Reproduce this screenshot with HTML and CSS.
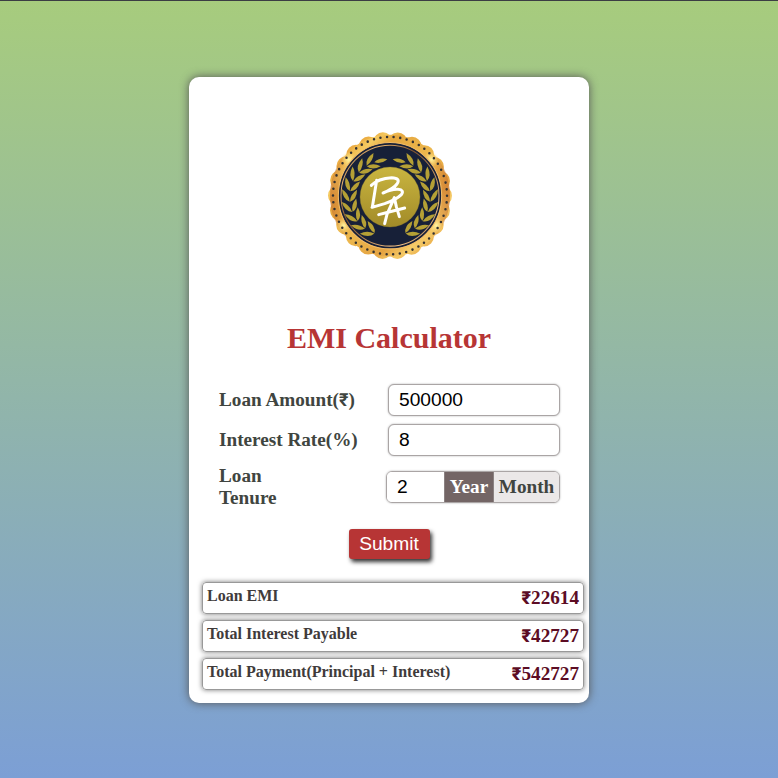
FILE: index.html
```
<!DOCTYPE html>
<html lang="en">
<head>
<meta charset="utf-8">
<title>EMI Calculator</title>
<link rel="stylesheet" href="styles.css">
</head>
<body>
<main class="card">
  <svg class="logo" viewBox="0 0 420 420" aria-hidden="true">
    <defs>
      <linearGradient id="gold" x1="0" y1="0" x2="1" y2="1">
        <stop offset="0" stop-color="#e6a443"/><stop offset=".14" stop-color="#edb145"/><stop offset=".2" stop-color="#f5cb62"/><stop offset=".28" stop-color="#e6a840"/>
        <stop offset=".5" stop-color="#edb84e"/><stop offset=".7" stop-color="#e5a443"/><stop offset=".8" stop-color="#f5cb68"/><stop offset="1" stop-color="#e8a643"/>
      </linearGradient>
      <radialGradient id="glow">
        <stop offset="0" stop-color="#fff3a0"/><stop offset="1" stop-color="#ffe07a" stop-opacity="0"/>
      </radialGradient>
      <linearGradient id="side" x1="0" y1="0" x2="1" y2="0">
        <stop offset="0" stop-color="#c9752f" stop-opacity=".7"/><stop offset=".15" stop-color="#c9752f" stop-opacity="0"/>
        <stop offset=".85" stop-color="#c9752f" stop-opacity="0"/><stop offset="1" stop-color="#c9752f" stop-opacity=".7"/>
      </linearGradient>
      <linearGradient id="copper" x1="0" y1="0" x2="1" y2="1">
        <stop offset="0" stop-color="#6b4a35"/><stop offset=".2" stop-color="#edb66e"/><stop offset=".4" stop-color="#81532f"/><stop offset=".8" stop-color="#f2c084"/><stop offset="1" stop-color="#6b4a35"/>
      </linearGradient>
      <linearGradient id="disc" x1="0" y1="0" x2="0" y2="1">
        <stop offset="0" stop-color="#c9b540"/><stop offset="1" stop-color="#a28b28"/>
      </linearGradient>
      <g id="leaf">
        <path d="M-14-1Q-8-22 23-24Q12-4-14-1Z"/>
        <path d="M-14 0Q8 0 22 21Q-7 21-14 0Z"/>
      </g>
      <g id="branch" fill="#b5a035">
        <use href="#leaf" transform="rotate(-150) translate(0 -117)"/>
        <use href="#leaf" transform="rotate(-135) translate(0 -119)"/>
        <use href="#leaf" transform="rotate(-120) translate(0 -120)"/>
        <use href="#leaf" transform="rotate(-105) translate(0 -120)"/>
        <use href="#leaf" transform="rotate(-90) translate(0 -120)"/>
        <use href="#leaf" transform="rotate(-75) translate(0 -120)"/>
        <use href="#leaf" transform="rotate(-60) translate(0 -119)"/>
        <use href="#leaf" transform="rotate(-45) translate(0 -117)"/>
        <use href="#leaf" transform="rotate(-30) translate(0 -115)"/>
        <path d="M-47-104Q-31-120-8-113Q-25-98-47-104Z"/>
      </g>
    </defs>
    <g transform="translate(210 212) scale(1 1.03)">
      <circle r="157" fill="none" stroke="url(#gold)" stroke-width="58" stroke-linecap="round" stroke-dasharray="0 50" pathLength="1100"/>
      <circle r="177.5" fill="url(#gold)"/>
      <circle r="180" fill="url(#side)"/>
      <circle cx="-124" cy="-105" r="23" fill="url(#glow)"/>
      <circle cx="124" cy="-105" r="23" fill="url(#glow)"/>
      <circle cx="-139" cy="87" r="24" fill="url(#glow)"/>
      <circle cx="139" cy="87" r="24" fill="url(#glow)"/>
      <circle r="171" fill="none" stroke="#343232" stroke-width="7.5" stroke-linecap="round" stroke-dasharray="0 20" pathLength="1080"/>
      <circle r="155" fill="#172038" stroke="#f4bd68" stroke-width="3"/>
      <circle r="147" fill="none" stroke="url(#copper)" stroke-width="3"/>
    </g>
    <g transform="translate(210 216)">
      <use href="#branch"/>
      <use href="#branch" transform="scale(-1 1)"/>
      <circle r="90" fill="url(#disc)" stroke="#8d792c" stroke-width="1"/>
    </g>
    <g fill="none" stroke="#fff" stroke-width="9" stroke-linecap="round" stroke-linejoin="round">
      <path d="M170 166L157 247M154 181Q175 160 215 158Q243 159 231 177Q220 192 189 204Q214 192 234 193Q254 195 244 209Q228 225 194 236L156 247"/>
      <path d="M194 296L201 268L223 218L229 245L238 275M176 269L207 261L254 249"/>
    </g>
  </svg>
  <h1>EMI Calculator</h1>
  <form class="form">
    <div class="row"><label for="amount">Loan Amount(<span class="rupee">₹</span>)</label><input id="amount" type="text" value="500000"></div>
    <div class="row"><label for="rate">Interest Rate(%)</label><input id="rate" type="text" value="8"></div>
    <div class="row tenure">
      <label for="tenure">Loan Tenure</label>
      <div class="group"><input id="tenure" type="text" value="2"><span class="unit active">Year</span><span class="unit">Month</span></div>
    </div>
    <button type="button">Submit</button>
  </form>
  <section class="results">
    <div class="result"><span>Loan EMI</span><strong><span class="rupee">₹</span>22614</strong></div>
    <div class="result"><span>Total Interest Payable</span><strong><span class="rupee">₹</span>42727</strong></div>
    <div class="result"><span>Total Payment(Principal + Interest)</span><strong><span class="rupee">₹</span>542727</strong></div>
  </section>
</main>
</body>
</html>
```
FILE: styles.css
```
* { box-sizing: border-box; }
body {
  margin: 0;
  height: 778px;
  overflow: hidden;
  border-top: 1px solid #3b3d43;
  padding-top: 76px;
  background: linear-gradient(#a7cc7d, #7c9fd5);
  font-family: "Liberation Serif", serif;
  font-weight: bold;
  color: #404540;
}
.card {
  width: 400px;
  height: 626px;
  margin: 0 auto;
  padding-top: 48px;
  border-radius: 10px;
  background: #fff;
  box-shadow: 0 0 10px #555;
}
.logo { display: block; width: 140px; height: 140px; margin-left: 131px; }
h1 {
  margin: 55px 0 0;
  height: 36px;
  line-height: 36px;
  text-align: center;
  font-size: 30px;
  color: #b73535;
}
.form { display: flex; flex-direction: column; padding: 28px 29px 0 30px; }
.row { display: flex; justify-content: space-between; align-items: center; height: 32px; margin-bottom: 8px; font-size: 19.2px; line-height: 22px; }
.rupee { display: inline-block; width: 9.6px; font-family: Roboto, sans-serif; font-size: 18px; line-height: 1; }
.row input {
  width: 172px;
  height: 32px;
  padding: 0 10px;
  border: 1px solid #aaa5a5;
  border-radius: 6px;
  background: #fff;
  box-shadow: 0 0 2px #aaa;
  font: 19.2px "Liberation Sans", sans-serif;
  color: #000;
  outline: 0;
}
.tenure { height: 46px; margin: 0 0 19px; }
.tenure label { width: 80px; }
.group { display: flex; width: 174px; height: 32px; border: 1px solid #aaa5a5; border-radius: 6px; overflow: hidden; box-shadow: 0 0 2px #aaa; }
.group input { width: 57px; height: 30px; border: 0; border-radius: 0; box-shadow: none; }
.unit { flex: 1; line-height: 30px; text-align: center; background: #ebe8e8; }
.unit.active { flex: 0 0 50px; background: #736565; color: #fff; border: solid #8b8282; border-width: 0 1px; }
button {
  align-self: center;
  width: 81px;
  height: 30px;
  padding: 0 1px 1px 0;
  border: 0;
  border-radius: 3px;
  background: #b73535;
  color: #fff;
  box-shadow: 2px 3px 4px #333;
  font: 19.2px "Liberation Sans", sans-serif;
}
.results { display: flex; flex-direction: column; gap: 6px; padding: 23px 5px 0 13px; }
.result {
  display: flex;
  justify-content: space-between;
  height: 32px;
  padding: 4px;
  border: 1px solid #999;
  border-radius: 4px;
  box-shadow: 0 0 5px #777;
  font-size: 16px;
  line-height: 18px;
  color: #403b3b;
}
.result strong { font-size: 19.2px; line-height: 22px; color: #5c0c24; }
```
